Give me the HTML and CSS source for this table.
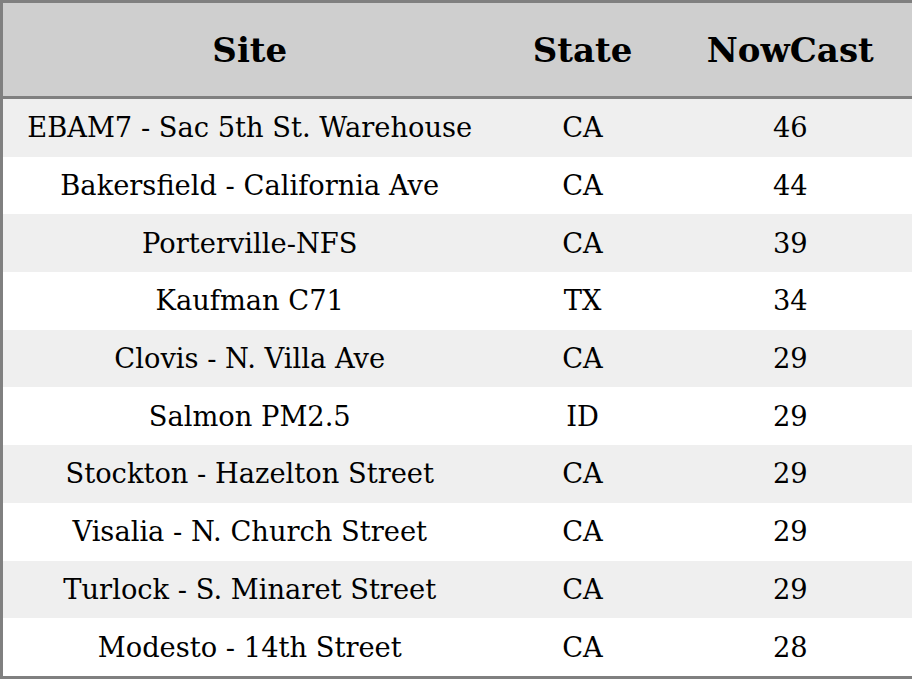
FILE: index.html
```html
<!DOCTYPE html>
<html>
<head>
<meta charset="utf-8">
<link rel="stylesheet" href="styles.css">
</head>
<body>
<table class="aq">
  <colgroup>
    <col class="c-site">
    <col class="c-state">
    <col class="c-now">
  </colgroup>
  <thead>
    <tr><th>Site</th><th>State</th><th>NowCast</th></tr>
  </thead>
  <tbody>
    <tr><td>EBAM7 - Sac 5th St. Warehouse</td><td>CA</td><td>46</td></tr>
    <tr><td>Bakersfield - California Ave</td><td>CA</td><td>44</td></tr>
    <tr><td>Porterville-NFS</td><td>CA</td><td>39</td></tr>
    <tr><td>Kaufman C71</td><td>TX</td><td>34</td></tr>
    <tr><td>Clovis - N. Villa Ave</td><td>CA</td><td>29</td></tr>
    <tr><td>Salmon PM2.5</td><td>ID</td><td>29</td></tr>
    <tr><td>Stockton - Hazelton Street</td><td>CA</td><td>29</td></tr>
    <tr><td>Visalia - N. Church Street</td><td>CA</td><td>29</td></tr>
    <tr><td>Turlock - S. Minaret Street</td><td>CA</td><td>29</td></tr>
    <tr><td>Modesto - 14th Street</td><td>CA</td><td>28</td></tr>
  </tbody>
</table>
</body>
</html>
```

FILE: styles.css
```css
html, body {
  margin: 0;
  padding: 0;
  background: #ffffff;
}
.aq {
  width: 912px;
  border-collapse: collapse;
  border: 3px solid #808080;
  table-layout: fixed;
  font-family: "DejaVu Serif", serif;
  color: #000;
}
.c-site { width: 495px; }
.c-state { width: 172px; }
.c-now { width: 245px; }
.aq th {
  height: 93px;
  padding: 0;
  background: #cfcfcf;
  font-size: 34px;
  font-weight: bold;
  text-align: center;
  border-bottom: 3px solid #808080;
}
.aq td {
  height: 57.7px;
  padding: 0;
  font-size: 27.3px;
  text-align: center;
}
.aq tbody tr:nth-child(odd) td {
  background: #efefef;
}
```
